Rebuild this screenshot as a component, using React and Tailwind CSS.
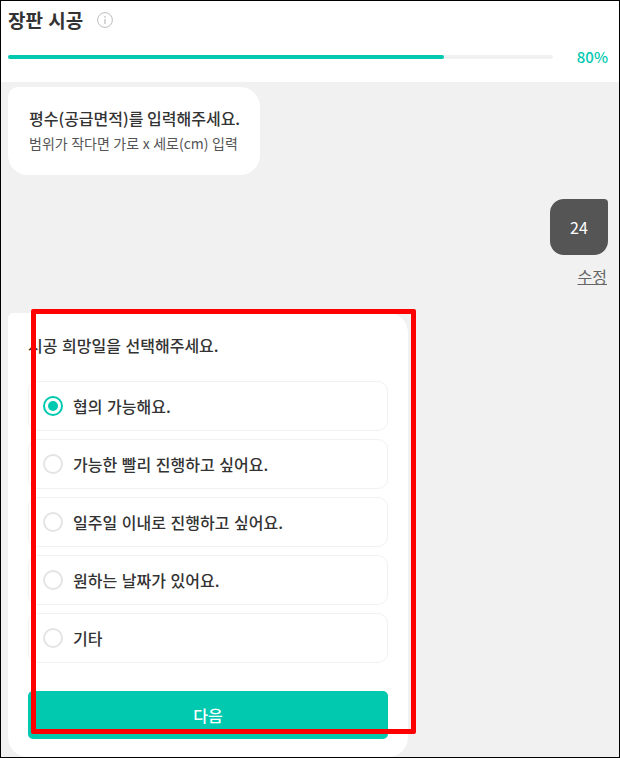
const options = [
  '협의 가능해요.',
  '가능한 빨리 진행하고 싶어요.',
  '일주일 이내로 진행하고 싶어요.',
  '원하는 날짜가 있어요.',
  '기타',
];

function InfoIcon() {
  return (
    <svg width="16" height="16" viewBox="0 0 16 16" fill="none" className="block">
      <circle cx="8" cy="8" r="7.4" stroke="#bdbdbd" strokeWidth="1" />
      <circle cx="8" cy="4.9" r="0.8" fill="#bdbdbd" />
      <path d="M8 7v5" stroke="#bdbdbd" strokeWidth="1.2" />
    </svg>
  );
}

function Radio({ checked }) {
  if (checked) {
    return (
      <span className="flex h-5 w-5 items-center justify-center rounded-full border-2 border-[#00c9b0]">
        <span className="h-[10px] w-[10px] rounded-full bg-[#00c9b0]" />
      </span>
    );
  }
  return <span className="h-5 w-5 rounded-full border-2 border-[#e4e4e4] bg-white" />;
}

export default function App() {
  return (
    <div className="relative h-[758px] w-[620px] overflow-hidden border border-black bg-[#f1f1f1] font-['Noto_Sans_CJK_KR','Noto_Sans',sans-serif] text-[#333]">
      <div className="h-[81px] bg-white pl-[7px] pr-[11px]">
        <div className="flex h-[37px] items-center">
          <h1 className="text-[19px] leading-[37px] font-bold text-[#333] [word-spacing:1px]">장판 시공</h1>
          <span className="ml-[14px]"><InfoIcon /></span>
        </div>
        <div className="mt-[7px] flex h-6 items-center">
          <div className="h-1 w-[545px] rounded-full bg-[#f1f1f1]">
            <div className="h-1 w-[80%] rounded-full bg-[#00c9b0]" />
          </div>
          <span className="ml-auto text-[15px] leading-5 font-medium text-[#00c9b0]">80%</span>
        </div>
      </div>

      <div className="pr-[11px] pl-[7px] pt-[5px]">
        <div className="h-[88px] w-[252px] rounded-[20px] rounded-tl-[10px] bg-white pt-[19px] pl-[21px]">
          <p className="text-[16px] leading-[24px] font-medium text-[#333]">평수(공급면적)를 입력해주세요.</p>
          <p className="mt-[3px] text-[14px] leading-[20px] text-[#555] [word-spacing:0.4px]">범위가 작다면 가로 x 세로(cm) 입력</p>
        </div>

        <div className="mt-[24px] flex flex-col items-end">
          <div className="flex h-[56px] w-[58px] items-center justify-center rounded-[14px] rounded-tr-[4px] bg-[#555] text-[16px] text-white">24</div>
          <button className="mt-[9px] mr-px h-[24px] text-[16px] leading-6 text-[#666] underline">수정</button>
        </div>

        <div className="mt-[25px] h-[444px] w-[400px] rounded-[20px] rounded-tl-[5px] bg-white px-5 pt-[20px]">
          <p className="text-[16px] leading-6 font-medium text-[#333] [word-spacing:1px]">시공 희망일을 선택해주세요.</p>
          <div className="mt-[24px] flex flex-col gap-2">
            {options.map((label, i) => (
              <label key={label} className="flex h-[50px] items-center gap-[10px] rounded-[10px] border border-[#f1f1f1] pl-[14px]">
                <Radio checked={i === 0} />
                <span className="text-[16px] font-medium text-[#333] [word-spacing:1px]">{label}</span>
              </label>
            ))}
          </div>
          <button className="mt-[28px] h-[48px] w-full rounded-[5px] bg-[#00c9b0] text-[16px] font-medium text-white">다음</button>
        </div>
      </div>

      <div className="pointer-events-none absolute top-[308px] left-[30px] h-[425px] w-[385px] rounded-[2px] border-[5px] border-[#ff0000]" />
    </div>
  );
}
